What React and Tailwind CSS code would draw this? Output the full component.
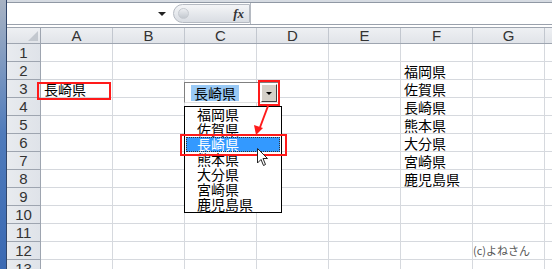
import React from "react";

const cols = ["A", "B", "C", "D", "E", "F", "G"];
const rows = [1, 2, 3, 4, 5, 6, 7, 8, 9, 10, 11, 12, 13];
const prefs = ["福岡県", "佐賀県", "長崎県", "熊本県", "大分県", "宮崎県", "鹿児島県"];

const cells = {
  "3A": "長崎県",
  "2F": "福岡県",
  "3F": "佐賀県",
  "4F": "長崎県",
  "5F": "熊本県",
  "6F": "大分県",
  "7F": "宮崎県",
  "8F": "鹿児島県",
};

const jp = { fontFamily: '"Noto Sans CJK JP", "Noto Sans", sans-serif' };
const sans = { fontFamily: '"Liberation Sans", Arial, sans-serif' };

function FormulaBar() {
  return (
    <div className="flex flex-col">
      <div className="h-[3px] bg-[#d6dbe2] border-b border-[#9098a4]" />
      <div className="flex h-[21px] bg-white">
        <div className="w-[166px] flex items-center justify-end pr-[7px]">
          <span className="block w-0 h-0 border-l-[4px] border-r-[4px] border-t-[4px] border-l-transparent border-r-transparent border-t-[#222]" />
        </div>
        <div className="w-[77px] my-[1px] flex items-center justify-between rounded-l-full bg-gradient-to-b from-[#f4f5f7] to-[#d9dde3] border border-[#b5bac2] pl-[4px] pr-[5px]">
          <span className="w-[11px] h-[11px] rounded-full bg-gradient-to-b from-[#eceef1] to-[#c3c8cf] border border-[#c6cad0]" />
          <span className="text-[13px] italic font-bold text-[#333] leading-none" style={{ fontFamily: '"Liberation Serif", serif' }}>
            fx
          </span>
        </div>
        <div className="flex-1 border-l border-[#b5bac2]" />
      </div>
      <div className="h-[1px] bg-[#9aa1ac]" />
      <div className="h-[2px] bg-white" />
    </div>
  );
}

function HeaderRow() {
  return (
    <div className="flex h-[20px] border-t border-b border-[#9ea5b0] bg-gradient-to-b from-[#eef0f3] to-[#e1e4e9]" style={sans}>
      <div className="w-[34px] border-r border-[#9ea5b0] flex items-end justify-end pr-[2px] pb-[2px]">
        <span className="block w-0 h-0 border-l-[10px] border-b-[10px] border-l-transparent border-b-[#c3c8cf]" />
      </div>
      {cols.map((c) => (
        <div key={c} className="w-[72px] border-r border-[#c2c7cf] flex items-center justify-center text-[15px] text-[#333] leading-none">
          {c}
        </div>
      ))}
      <div className="flex-1" />
    </div>
  );
}

function GridRow({ n }) {
  return (
    <div className="flex h-[18px] shrink-0">
      <div className="w-[34px] border-r border-b border-[#9ea5b0] bg-gradient-to-r from-[#e8ebef] to-[#dfe3e9] flex items-center justify-center text-[15px] text-[#333] leading-none" style={sans}>
        {n}
      </div>
      {cols.map((c) => {
        const v = cells[n + c];
        const credit = n === 12 && c === "G";
        return (
          <div key={c} className="w-[72px] border-r border-b border-[#d6d9de] bg-white flex items-center px-[3px] whitespace-nowrap">
            {v && (
              <span className="text-[14px] text-black leading-none" style={jp}>
                {v}
              </span>
            )}
            {credit && (
              <span className="text-[11px] text-[#555] leading-none -ml-[3px]" style={jp}>
                (c)よねさん
              </span>
            )}
          </div>
        );
      })}
      <div className="flex-1 border-b border-[#d6d9de] bg-white" />
    </div>
  );
}

function Overlays() {
  return (
    <>
      {/* red box in A3 */}
      <div className="absolute left-[37px] top-[82px] w-[74px] h-[18px] border-2 border-[#ff1a1a]" />

      {/* combo box */}
      <div className="absolute left-[184px] top-[82px] w-[96px] h-[21px] bg-white border-t border-l border-[#808080] border-r border-b border-r-[#e0e0e0] border-b-[#e0e0e0] flex items-center pl-[6px]">
        <span className="bg-[#99c9f5] text-black text-[14px] leading-none px-[3px] py-[1px]" style={jp}>
          長崎県
        </span>
      </div>
      <div className="absolute left-[261px] top-[84px] w-[16px] h-[18px] bg-[#d4d0c8] border border-t-white border-l-white border-r-[#404040] border-b-[#404040] flex items-center justify-center">
        <span className="block w-0 h-0 border-l-[3px] border-r-[3px] border-t-[3px] border-l-transparent border-r-transparent border-t-black" />
      </div>
      <div className="absolute left-[258px] top-[80px] w-[22px] h-[26px] border-2 border-[#ff1a1a]" />

      {/* dropdown list */}
      <div className="absolute left-[184px] top-[106px] w-[98px] h-[107px] bg-white border border-black flex flex-col" style={jp}>
        {prefs.map((p, i) => (
          <div
            key={p + i}
            className={
              i === 2
                ? "h-[15px] flex items-center pl-[11px] bg-[#3399ff] text-white text-[14px] leading-[15px] outline outline-1 outline-dotted outline-[#333] -outline-offset-1 mx-[1px]"
                : "h-[15px] flex items-center pl-[12px] text-black text-[14px] leading-[15px]"
            }
          >
            {p}
          </div>
        ))}
      </div>
      <div className="absolute left-[180px] top-[134px] w-[107px] h-[22px] border-2 border-[#ff1a1a]" />

      {/* red arrow */}
      <svg className="absolute left-[250px] top-[104px]" width="24" height="34" viewBox="0 0 24 34">
        <line x1="18" y1="2" x2="9" y2="26" stroke="#ff1a1a" strokeWidth="2" />
        <polygon points="6,31 4,21 13,24" fill="#ff1a1a" />
      </svg>

      {/* mouse cursor */}
      <svg className="absolute left-[257px] top-[148px]" width="13" height="20" viewBox="0 0 13 20">
        <path d="M0.5 0.5 L0.5 15 L4 11.5 L6.5 17.5 L8.5 16.5 L6 10.5 L10.5 10.5 Z" fill="white" stroke="#222" strokeWidth="1" />
      </svg>
    </>
  );
}

export default function App() {
  return (
    <div className="relative w-[552px] h-[269px] overflow-hidden flex bg-white">
      <div className="w-[7px] h-full flex">
        <div className="w-[6px] h-full bg-gradient-to-b from-[#a8b3c3] via-[#4f7bbb] to-[#3a69b3]" />
        <div className="w-[1px] h-full bg-[#31466a]" />
      </div>
      <div className="flex-1 flex flex-col">
        <FormulaBar />
        <HeaderRow />
        {rows.map((n) => (
          <GridRow key={n} n={n} />
        ))}
      </div>
      <Overlays />
    </div>
  );
}
